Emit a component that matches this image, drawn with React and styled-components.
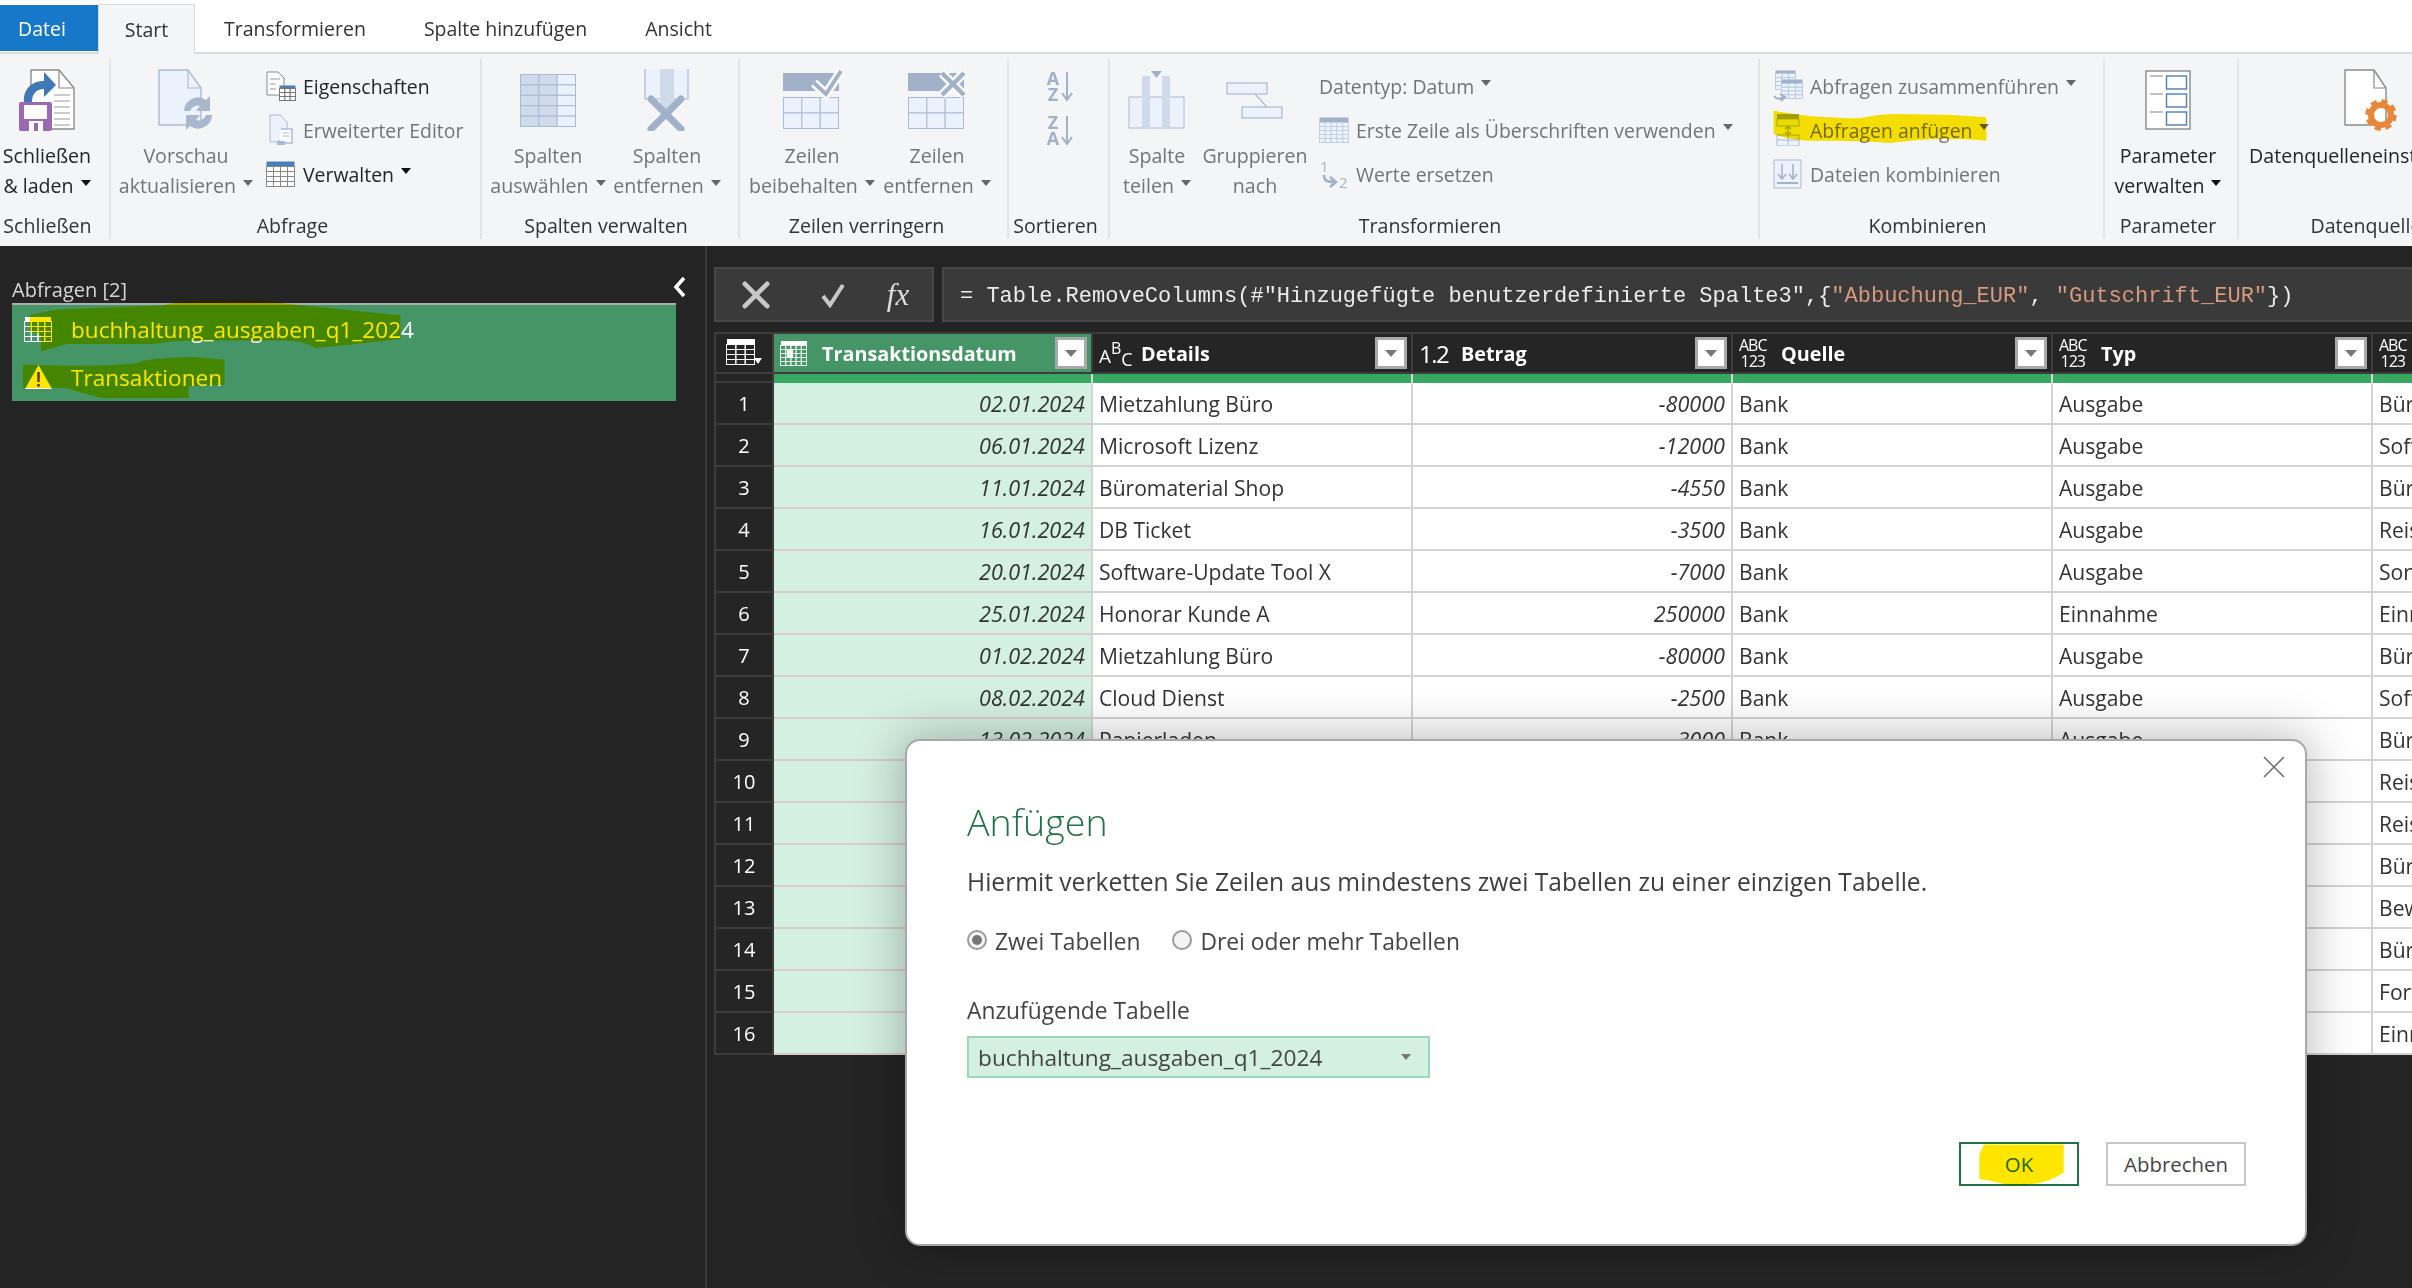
import React from "react";
import styled, { createGlobalStyle } from "styled-components";

const Global = createGlobalStyle`
  html, body { margin: 0; padding: 0; background: #252525; }
  body { width: 2412px; height: 1288px; overflow: hidden; font-family: "Open Sans", "Noto Sans", sans-serif; }
  * { box-sizing: border-box; }
`;

const Page = styled.div`
  width: 2412px; height: 1288px; position: relative; overflow: hidden;
  display: flex; flex-direction: column; background: #252525;
`;

/* tabs */
const TabBar = styled.div`
  height: 54px; flex: none; display: flex; align-items: flex-end; background: #fff;
  border-bottom: 2px solid #d9dadc; font-size: 19.5px; color: #333;
`;
const FileTab = styled.div`
  width: 98px; height: 46px; align-self: flex-start; margin-top: 5px; padding-right: 14px;
  background: #1777c9; color: #fff; display: flex; align-items: center; justify-content: center;
`;
const ActiveTab = styled.div`
  width: 97px; height: 50px; margin-bottom: -2px; background: #f4f5f7;
  border: 1px solid #d9dadc; border-bottom: 0; display: flex; align-items: center; justify-content: center;
`;
const Tab = styled.div`
  height: 48px; padding: 0 29px; display: flex; align-items: center;
`;

/* ribbon */
const Ribbon = styled.div`
  height: 192px; flex: none; background: #f4f5f7; display: flex; padding-top: 5px; align-items: flex-start;
`;
const Group = styled.div`
  width: ${p => p.$w}px; height: 180px; flex: none; display: flex; flex-direction: column;
  border-right: ${p => (p.$last ? "0" : "2px solid #e3e4e6")};
`;
const GroupBody = styled.div`
  height: 154px; display: flex; align-items: flex-start; padding-left: ${p => p.$pad || 0}px;
`;
const GroupLabel = styled.div`
  height: 26px; line-height: 26px; text-align: center; font-size: 19.6px; color: #333; white-space: nowrap;
  padding-right: ${p => p.$shift || 0}px;
`;
const Big = styled.div`
  width: ${p => p.$w}px; flex: none; display: flex; flex-direction: column; align-items: center;
  color: ${p => (p.$off ? "#747474" : "#252525")}; font-size: 19.6px; white-space: nowrap;
`;
const BigIcon = styled.div`
  height: 82px; display: flex; align-items: center; justify-content: center;
`;
const BigLine = styled.div`
  height: 30px; line-height: 30px; display: flex; align-items: center;
`;
const Caret = styled.span`
  display: inline-block; width: 0; height: 0; margin-left: 7px; margin-bottom: 6px;
  border-left: 5.5px solid transparent; border-right: 5.5px solid transparent;
  border-top: 6px solid ${p => (p.$off ? "#666" : "#111")};
`;
const SmallCol = styled.div`
  display: flex; flex-direction: column; padding-top: 5px; margin-left: ${p => p.$ml || 0}px;
`;
const SmallRow = styled.div`
  height: 44px; display: flex; align-items: center; position: relative; white-space: nowrap;
  color: ${p => (p.$off ? "#747474" : "#252525")}; font-size: 19.45px;
`;
const SmallIcon = styled.div`
  width: 37px; flex: none; height: 32px; display: flex; align-items: center;
`;
const SortCol = styled.div`
  width: 100%; display: flex; flex-direction: column; align-items: center; gap: 13px; padding-top: 12px;
`;

/* highlighter stroke */
const Marker = styled.svg`
  position: absolute; left: ${p => p.$x}px; top: ${p => p.$y}px;
  mix-blend-mode: multiply; pointer-events: none; overflow: visible;
`;
const Blob = ({ x, y, w, h, box, d }) => (
  <Marker $x={x} $y={y} width={w} height={h} viewBox={box} preserveAspectRatio="none">
    <path d={d} fill="#ffe600" />
  </Marker>
);

/* body */
const Body = styled.div`
  flex: 1; display: flex; min-height: 0; background: #242424;
`;
const Pane = styled.div`
  width: 707px; flex: none; border-right: 2px solid #3c3c3c; padding: 30px 0 0 12px; color: #fff;
`;
const PaneHead = styled.div`
  width: 675px; height: 27px; display: flex; justify-content: space-between; align-items: flex-start;
  font-size: 20px; color: #d6d6d6; line-height: 27px;
`;
const QueryList = styled.div`
  width: 664px; height: 98px; background: #459566; border-top: 2px solid #adadad; position: relative;
`;
const QueryRow = styled.div`
  height: 48px; display: flex; align-items: center; padding-left: 12px; font-size: 22.6px; color: #fff;
`;
const QueryIcon = styled.div`
  width: 47px; flex: none; display: flex; align-items: center;
`;
const Main = styled.div`
  flex: 1; min-width: 0; padding: 21px 0 0 7px; display: flex; flex-direction: column; overflow: hidden;
`;
const FormulaBar = styled.div`
  height: 55px; flex: none; display: flex; gap: 8px; margin-bottom: 10px;
`;
const FormulaTools = styled.div`
  width: 220px; flex: none; background: #3a3a3a; border: 2px solid #474747; display: flex; align-items: center;
  color: #cfcfcf;
`;
const ToolSlot = styled.div`
  width: ${p => p.$w}px; flex: none; display: flex; justify-content: center; align-items: center;
`;
const Fx = styled.span`
  font-family: "Liberation Serif", serif; font-style: italic; font-size: 31px; color: #dedede;
`;
const FormulaInput = styled.div`
  flex: 1; background: #3a3a3a; border: 2px solid #474747; border-right: 0; display: flex; align-items: center;
  padding: 3px 0 0 16px; font-family: "Liberation Mono", monospace; font-size: 22px; color: #ececec; white-space: pre;
`;
const Str = styled.span` color: #d79a7d; `;

const Table = styled.div`
  flex: none; display: flex; flex-direction: column; background: #252525;
`;
const HeadRow = styled.div`
  height: 42px; display: flex; border-top: 2px solid #3c3c3c; border-bottom: 2px solid #3c3c3c;
`;
const Corner = styled.div`
  width: 60px; flex: none; border-left: 2px solid #3c3c3c; border-right: 2px solid #3c3c3c;
  display: flex; align-items: center; justify-content: center;
`;
const HeadCell = styled.div`
  width: ${p => p.$w}px; flex: none; display: flex; align-items: center; position: relative;
  background: ${p => (p.$active ? "#459566" : "#252525")}; border-right: 2px solid #3c3c3c;
  color: #fff; font-weight: 700; font-size: 19.8px; padding-right: 4px; white-space: nowrap; overflow: hidden;
`;
const TypeBox = styled.div`
  width: 48px; flex: none; padding-left: 6px; display: flex; align-items: center; font-weight: 400;
  font-family: "Open Sans", sans-serif;
`;
const HeadName = styled.div` flex: 1; min-width: 0; `;
const FilterBtn = styled.div`
  width: 32px; height: 32px; flex: none; background: #fff; border: 3px solid #a9a9a9;
  display: flex; align-items: center; justify-content: center;
  &::after {
    content: ""; border-left: 6px solid transparent; border-right: 6px solid transparent; border-top: 7px solid #777;
  }
`;
const AbcStack = styled.div`
  display: flex; flex-direction: column; font-size: 16px; line-height: 16px; text-align: center; letter-spacing: -1px; color: #fff;
`;
const AbcLine = styled.span`
  font-size: ${p => p.$size}px; position: relative; top: ${p => p.$up}px;
`;
const AbcWrap = styled.div`
  display: flex; align-items: center; color: #fff; line-height: 1;
`;
const NumType = styled.span` font-size: 24px; color: #fff; letter-spacing: -1.5px; `;
const Strip = styled.div`
  height: 9px; display: flex;
`;
const StripCorner = styled.div`
  width: 60px; flex: none; border-left: 2px solid #3c3c3c; border-right: 2px solid #3c3c3c; border-bottom: 2px solid #3c3c3c;
`;
const StripCell = styled.div`
  width: ${p => p.$w}px; flex: none; background: #36a862; border-right: 2px solid #d5d5d5;
`;
const Row = styled.div`
  height: 42px; display: flex;
`;
const RowNum = styled.div`
  width: 60px; flex: none; border-left: 2px solid #3c3c3c; border-right: 2px solid #3c3c3c; border-bottom: 2px solid #3c3c3c;
  color: #fff; font-size: 20px; display: flex; align-items: center; justify-content: center;
`;
const Cell = styled.div`
  width: ${p => p.$w}px; flex: none; height: 42px; display: flex; align-items: center; white-space: nowrap; overflow: hidden;
  justify-content: ${p => (p.$num ? "flex-end" : "flex-start")}; padding: 0 6px;
  font-style: ${p => (p.$num ? "italic" : "normal")}; font-size: ${p => (p.$num ? 21.6 : 21.1)}px; color: #333;
  background: ${p => (p.$date ? "#d4f0e1" : "#fff")};
  border-right: 2px solid #d3d3d3; border-bottom: 2px solid ${p => (p.$date ? "#d9cbd0" : "#d3d3d3")};
`;

/* dialog */
const Dialog = styled.div`
  position: absolute; left: 907px; top: 741px; width: 1398px; height: 503px; background: #fff;
  border-radius: 13px; box-shadow: 0 0 0 2px #a8a8a8, 0 0 46px 6px rgba(0,0,0,.26);
  padding: 56px 59px 58px 60px; display: flex; flex-direction: column; color: #444; z-index: 5;
`;
const CloseX = styled.svg`
  position: absolute; right: 20px; top: 15px;
`;
const Title = styled.div`
  height: 50px; line-height: 50px; font-size: 37.6px; font-weight: 300; color: #217346;
`;
const Lead = styled.div`
  height: 34px; line-height: 34px; margin-top: 18px; font-size: 24.6px; color: #3f3f3f; white-space: nowrap;
`;
const RadioRow = styled.div`
  height: 30px; margin-top: 27px; display: flex; align-items: center; font-size: 22.8px; color: #444;
`;
const Radio = styled.span`
  width: 20px; height: 20px; border-radius: 50%; flex: none; border: 2px solid #9a9a9a; background: #f4f4f4; margin: -3px 8px 0 0;
  display: flex; align-items: center; justify-content: center;
  &::after { content: ""; width: 10px; height: 10px; border-radius: 50%; background: ${p => (p.$on ? "#777" : "transparent")}; }
`;
const RadioText = styled.span` margin-right: 32px; `;
const FieldLabel = styled.div`
  height: 30px; line-height: 30px; margin-top: 40px; font-size: 22.8px; color: #444;
`;
const Select = styled.div`
  width: 463px; height: 42px; margin-top: 10px; background: #d4f0e1; border: 2px solid #9dd6b9;
  display: flex; align-items: center; justify-content: space-between; padding: 0 17px 0 9px; font-size: 22.7px; color: #444;
  &::after { content: ""; border-left: 5.5px solid transparent; border-right: 5.5px solid transparent; border-top: 6px solid #777; }
`;
const Actions = styled.div`
  margin-top: auto; display: flex; justify-content: flex-end; gap: 27px;
`;
const Button = styled.div`
  width: ${p => p.$w}px; height: 44px; position: relative; display: flex; align-items: center; justify-content: center;
  border: 2px solid ${p => (p.$primary ? "#217346" : "#c6c6c6")}; color: ${p => (p.$primary ? "#217346" : "#444")};
  background: #fff; font-size: 20.4px;
`;

/* icons */
const S = "#a9bad6", L = "#ebf2fb", M = "#cfdbea", H = "#a1b1ca";

const CloseLoadIcon = () => (
  <svg width="56" height="62" viewBox="0 0 56 62">
    <path d="M12 1H40L55 19V60H12Z" fill="#fff" stroke="#8a8a8a" strokeWidth="1.4" />
    <path d="M40 1V19H55" fill="none" stroke="#8a8a8a" strokeWidth="1.2" />
    {[26, 32, 38, 44, 50, 56].map(y => <path key={y} d={`M35 ${y}H51`} stroke="#a8a8a8" strokeWidth="1.2" />)}
    <path d="M5 33C4 19 14 12 25 12V3L37 16L25 28V20C18 20 13 24 13 33Z" fill="#3f77b7" />
    <rect x="0" y="33" width="33" height="29" rx="2" fill="#9a69b4" />
    <rect x="5" y="36" width="23" height="14" fill="#fff" />
    <rect x="10" y="52" width="14" height="10" fill="#fff" />
    <rect x="15" y="54" width="4" height="8" fill="#9a69b4" />
  </svg>
);
const DocRefreshIcon = () => (
  <svg width="56" height="62" viewBox="0 0 56 62">
    <path d="M1 1H30L43 19V56H1Z" fill={L} stroke={S} strokeWidth="1.4" />
    <path d="M30 1V19H43" fill="none" stroke={S} strokeWidth="1.2" />
    <path d="M26 42A14 14 0 0 1 48 31L52 27V42H38L42 37A8 8 0 0 0 32 42Z" fill="#a9b7cc" />
    <path d="M54 46A14 14 0 0 1 32 57L28 61V46H42L38 51A8 8 0 0 0 48 46Z" fill="#a9b7cc" />
  </svg>
);
const GridSvg = ({ w, h, cols, rows, fill = L, stroke = S, dark, head, headH = 0, y0 = 0 }) => {
  const cw = w / cols, rh = (h - headH) / rows, out = [];
  for (let c = 0; c < cols; c++) for (let r = 0; r < rows; r++) {
    out.push(<rect key={`${c}-${r}`} x={0.5 + c * cw} y={0.5 + y0 + headH + r * rh} width={cw} height={rh}
      fill={dark && c < dark ? M : fill} stroke={stroke} strokeWidth="1" />);
  }
  return <>{head && <rect x="0.5" y={0.5 + y0} width={w} height={headH} fill={head} />}{out}</>;
};
const ChooseColsIcon = () => (
  <svg width="56" height="53" viewBox="0 0 56 53"><GridSvg w={55} h={52} cols={3} rows={5} dark={2} /></svg>
);
const RemoveColsIcon = () => (
  <svg width="46" height="62" viewBox="0 0 46 62">
    <path d="M1 0V30H44V0" fill={L} stroke={S} strokeWidth="1.2" />
    <path d="M16 0H30V36L23 46L16 36Z" fill={M} />
    <path d="M7 30L37 60M37 30L7 60" stroke={H} strokeWidth="7" strokeLinecap="round" />
  </svg>
);
const KeepRowsIcon = () => (
  <svg width="58" height="62" viewBox="0 0 58 62" style={{ overflow: "visible" }}>
    <rect x="0" y="4" width="56" height="18" fill={H} />
    <g transform="translate(0 28)"><GridSvg w={55} h={31} cols={3} rows={2} /></g>
    <path d="M31 14L43 25L58 2" fill="none" stroke="#fff" strokeWidth="9" />
    <path d="M31 14L43 25L58 2" fill="none" stroke={H} strokeWidth="4" />
  </svg>
);
const RemoveRowsIcon = () => (
  <svg width="58" height="62" viewBox="0 0 58 62">
    <rect x="0" y="4" width="56" height="18" fill={H} />
    <g transform="translate(0 28)"><GridSvg w={55} h={31} cols={3} rows={2} /></g>
    <path d="M34 4L56 26M56 4L34 26" stroke="#fff" strokeWidth="9" />
    <path d="M34 4L56 26M56 4L34 26" stroke={H} strokeWidth="4.5" />
  </svg>
);
const SortIcon = ({ a, b }) => (
  <svg width="28" height="31" viewBox="0 0 28 31">
    <text x="8" y="14" textAnchor="middle" fontFamily="Open Sans, sans-serif" fontWeight="700" fontSize="18" fill={H}>{a}</text>
    <text x="8" y="30" textAnchor="middle" fontFamily="Open Sans, sans-serif" fontWeight="700" fontSize="18" fill={H}>{b}</text>
    <path d="M22 1V28M17 22L22 29L27 22" fill="none" stroke={H} strokeWidth="2" />
  </svg>
);
const SplitIcon = () => (
  <svg width="58" height="58" viewBox="0 0 58 58">
    <rect x="1" y="26" width="55" height="31" fill={L} stroke={S} />
    <rect x="14" y="5" width="8" height="53" fill={M} />
    <rect x="34" y="5" width="8" height="53" fill={M} />
    <path d="M23 0H34L28.5 7Z" fill={H} />
  </svg>
);
const GroupIcon = () => (
  <svg width="58" height="37" viewBox="0 0 58 37">
    <rect x="1" y="1" width="40" height="11" fill={L} stroke={S} strokeWidth="1.2" />
    <rect x="16" y="25" width="40" height="11" fill={L} stroke={S} strokeWidth="1.2" />
    <path d="M29 12L41 25" stroke={S} strokeWidth="1.2" />
  </svg>
);
const FirstRowIcon = () => (
  <svg width="30" height="26" viewBox="0 0 30 26"><GridSvg w={29} h={25} cols={5} rows={5} head={H} headH={5} stroke="#c4d0e2" /></svg>
);
const ReplaceIcon = () => (
  <svg width="30" height="32" viewBox="0 0 30 32">
    <text x="1" y="14" fontFamily="Open Sans, sans-serif" fontSize="15" fill={H}>1</text>
    <text x="20" y="30" fontFamily="Open Sans, sans-serif" fontSize="15" fill={H}>2</text>
    <path d="M5 17C5 23 8 24 16 24M11 19L17 24L11 29" fill="none" stroke={H} strokeWidth="2.6" />
  </svg>
);
const MergeIcon = () => (
  <svg width="30" height="32" viewBox="0 0 30 32">
    <g transform="translate(2 0)"><GridSvg w={20} h={19} cols={3} rows={4} head={H} headH={3} stroke="#bccbdf" /></g>
    <g transform="translate(8 9)"><GridSvg w={21} h={19} cols={3} rows={4} head={H} headH={4} stroke="#bccbdf" /></g>
    <path d="M1 26C4 30 7 29 12 27M7 24L12 27L8 31" fill="none" stroke={H} strokeWidth="2" />
  </svg>
);
const AppendIcon = () => (
  <svg width="30" height="32" viewBox="0 0 30 32">
    <rect x="4" y="0" width="22" height="5" fill={H} />
    <rect x="4" y="5" width="22" height="7" fill={L} stroke={S} />
    <rect x="4" y="21" width="22" height="11" fill={L} stroke={S} />
    <path d="M15 21V31M4 26H26" stroke={S} />
    <path d="M15 12V21M12 15L15 12L18 15M12 18L15 21L18 18" fill="none" stroke={S} strokeWidth="1.5" />
  </svg>
);
const CombineIcon = () => (
  <svg width="30" height="30" viewBox="0 0 30 30">
    <rect x="1" y="1" width="27" height="28" fill={L} stroke={S} />
    <path d="M9 5V19M5 15L9 20L13 15M20 5V19M16 15L20 20L24 15" fill="none" stroke={H} strokeWidth="1.5" />
    <path d="M4 24H25" stroke={H} strokeWidth="2" />
  </svg>
);
const PropsIcon = () => (
  <svg width="30" height="30" viewBox="0 0 30 30">
    <path d="M1 1H12L18 7V24H1Z" fill="#fff" stroke="#888" />
    <path d="M4 8H14M4 13H10M4 18H10" stroke="#999" />
    <g transform="translate(13 14)"><GridSvg w={16} h={15} cols={3} rows={3} head="#4a7fb8" headH={3} fill="#fff" stroke="#777" /></g>
  </svg>
);
const EditorIcon = () => (
  <svg width="30" height="32" viewBox="0 0 30 32">
    <path d="M4 1H14L21 8V28H4Z" fill={L} stroke={S} />
    <path d="M15 15H26V29H13V26" fill="#fff" stroke={S} strokeWidth="1.5" />
    <path d="M17 19H23M17 22H23" stroke={S} />
    <rect x="11" y="27" width="8" height="4" fill={S} />
  </svg>
);
const ManageIcon = () => (
  <svg width="30" height="26" viewBox="0 0 30 26">
    <GridSvg w={28} h={25} cols={4} rows={4} head="#4a7fb8" headH={5} fill="#fff" stroke="#888" />
  </svg>
);
const ParamIcon = () => (
  <svg width="46" height="60" viewBox="0 0 46 60">
    <rect x="1" y="1" width="44" height="58" fill="#fff" stroke="#777" strokeWidth="1.2" />
    {[6, 24, 42].map(y => (
      <g key={y}>
        <path d={`M5 ${y}H18`} stroke="#999" strokeWidth="1.2" />
        <rect x="21.5" y={y} width="20" height="13" fill="#fff" stroke="#4a7fb8" strokeWidth="1.4" />
      </g>
    ))}
  </svg>
);
const SourceIcon = () => (
  <svg width="56" height="62" viewBox="0 0 56 62" style={{ overflow: "visible" }}>
    <path d="M1 1H30L42 19V56H1Z" fill="#fff" stroke="#8a8a8a" strokeWidth="1.4" />
    <path d="M30 1V19H42" fill="none" stroke="#8a8a8a" strokeWidth="1.2" />
    <circle cx="37" cy="46" r="10" fill="none" stroke="#e8873a" strokeWidth="6" />
    <circle cx="37" cy="46" r="13.5" fill="none" stroke="#e8873a" strokeWidth="4.5" strokeDasharray="6 4.6" />
  </svg>
);
const ChevronLeft = () => (
  <svg width="14" height="22" viewBox="0 0 14 22"><path d="M11 2L3 11L11 20" fill="none" stroke="#fff" strokeWidth="3.6" /></svg>
);
const QueryTableIcon = () => (
  <svg width="28" height="27" viewBox="0 0 28 27">
    <rect x="1" y="1" width="26" height="5" fill="#fff" />
    <GridSvg w={27} h={25} cols={4} rows={4} headH={5} fill="none" stroke="#fff" />
  </svg>
);
const WarnIcon = () => (
  <svg width="29" height="26" viewBox="0 0 29 26">
    <path d="M14.5 1L28 25H1Z" fill="#fff" />
    <path d="M14.5 8V18" stroke="#444" strokeWidth="2.4" />
    <circle cx="14.5" cy="21.3" r="1.5" fill="#444" />
  </svg>
);
const CancelGlyph = () => (
  <svg width="30" height="28" viewBox="0 0 32 30"><path d="M4 3L28 27M28 3L4 27" stroke="#c8c8c8" strokeWidth="5" strokeLinecap="round" /></svg>
);
const CheckGlyph = () => (
  <svg width="26" height="26" viewBox="0 0 26 26"><path d="M3 14L10 23L23 3" fill="none" stroke="#c8c8c8" strokeWidth="4" /></svg>
);
const CornerIcon = () => (
  <svg width="36" height="28" viewBox="0 0 36 28">
    <rect x="1" y="0" width="28" height="5" fill="#fff" />
    <GridSvg w={28} h={25} cols={3} rows={4} headH={5} fill="none" stroke="#fff" />
    <path d="M28 19H36L32 25Z" fill="#fff" />
  </svg>
);
const DateIcon = () => (
  <svg width="28" height="25" viewBox="0 0 28 25">
    <rect x="1" y="0" width="26" height="4" fill="#fff" />
    <GridSvg w={26} h={24} cols={5} rows={5} headH={4} fill="none" stroke="#e4f2ea" />
    <rect x="7" y="9" width="6" height="8" fill="#fff" />
  </svg>
);

const TypeIcon = ({ kind }) => {
  if (kind === "date") return <DateIcon />;
  if (kind === "abc") return (
    <AbcWrap>
      <AbcLine $size={19} $up={3}>A</AbcLine><AbcLine $size={16} $up={-5}>B</AbcLine><AbcLine $size={18} $up={6}>C</AbcLine>
    </AbcWrap>
  );
  if (kind === "num") return <NumType>1.2</NumType>;
  return <AbcStack><span>ABC</span><span>123</span></AbcStack>;
};

const columns = [
  { w: 319, name: "Transaktionsdatum", kind: "date", active: true },
  { w: 320, name: "Details", kind: "abc" },
  { w: 320, name: "Betrag", kind: "num" },
  { w: 320, name: "Quelle", kind: "any" },
  { w: 320, name: "Typ", kind: "any" },
  { w: 320, name: "Kategorie", kind: "any" },
];

const rows = [
  ["02.01.2024", "Mietzahlung Büro", "-80000", "Bank", "Ausgabe", "Büro"],
  ["06.01.2024", "Microsoft Lizenz", "-12000", "Bank", "Ausgabe", "Software"],
  ["11.01.2024", "Büromaterial Shop", "-4550", "Bank", "Ausgabe", "Büro"],
  ["16.01.2024", "DB Ticket", "-3500", "Bank", "Ausgabe", "Reise"],
  ["20.01.2024", "Software-Update Tool X", "-7000", "Bank", "Ausgabe", "Sonstiges"],
  ["25.01.2024", "Honorar Kunde A", "250000", "Bank", "Einnahme", "Einnahmen"],
  ["01.02.2024", "Mietzahlung Büro", "-80000", "Bank", "Ausgabe", "Büro"],
  ["08.02.2024", "Cloud Dienst", "-2500", "Bank", "Ausgabe", "Software"],
  ["13.02.2024", "Papierladen", "-3000", "Bank", "Ausgabe", "Büro"],
  ["", "", "", "", "", "Reise"],
  ["", "", "", "", "", "Reise"],
  ["", "", "", "", "", "Büro"],
  ["", "", "", "", "", "Bewirtung"],
  ["", "", "", "", "", "Büro"],
  ["", "", "", "", "", "Fortbildung"],
  ["", "", "", "", "", "Einnahmen"],
];

const BigButton = ({ w, off, icon, lines, caret }) => (
  <Big $w={w} $off={off}>
    <BigIcon>{icon}</BigIcon>
    {lines.map((t, i) => (
      <BigLine key={i}>{t}{caret && i === lines.length - 1 && <Caret $off={off} />}</BigLine>
    ))}
  </Big>
);
const SmallButton = ({ off, icon, text, caret, children }) => (
  <SmallRow $off={off}>
    {icon && <SmallIcon>{icon}</SmallIcon>}
    {text}{caret && <Caret $off={off} />}
    {children}
  </SmallRow>
);

export default function App() {
  return (
    <Page>
      <Global />
      <TabBar>
        <FileTab>Datei</FileTab>
        <ActiveTab>Start</ActiveTab>
        <Tab>Transformieren</Tab>
        <Tab>Spalte hinzufügen</Tab>
        <Tab>Ansicht</Tab>
      </TabBar>

      <Ribbon>
        <Group $w={111}>
          <GroupBody><BigButton w={94} icon={<CloseLoadIcon />} lines={["Schließen", "& laden"]} caret /></GroupBody>
          <GroupLabel $shift={14}>Schließen</GroupLabel>
        </Group>
        <Group $w={371}>
          <GroupBody>
            <BigButton w={150} off icon={<DocRefreshIcon />} lines={["Vorschau", "aktualisieren"]} caret />
            <SmallCol $ml={5}>
              <SmallButton icon={<PropsIcon />} text="Eigenschaften" />
              <SmallButton off icon={<EditorIcon />} text="Erweiterter Editor" />
              <SmallButton icon={<ManageIcon />} text="Verwalten" caret />
            </SmallCol>
          </GroupBody>
          <GroupLabel $shift={6}>Abfrage</GroupLabel>
        </Group>
        <Group $w={258}>
          <GroupBody $pad={5}>
            <BigButton w={122} off icon={<ChooseColsIcon />} lines={["Spalten", "auswählen"]} caret />
            <BigButton w={116} off icon={<RemoveColsIcon />} lines={["Spalten", "entfernen"]} caret />
          </GroupBody>
          <GroupLabel $shift={8}>Spalten verwalten</GroupLabel>
        </Group>
        <Group $w={269}>
          <GroupBody $pad={8}>
            <BigButton w={128} off icon={<KeepRowsIcon />} lines={["Zeilen", "beibehalten"]} caret />
            <BigButton w={122} off icon={<RemoveRowsIcon />} lines={["Zeilen", "entfernen"]} caret />
          </GroupBody>
          <GroupLabel $shift={14}>Zeilen verringern</GroupLabel>
        </Group>
        <Group $w={101}>
          <GroupBody>
            <SortCol><SortIcon a="A" b="Z" /><SortIcon a="Z" b="A" /></SortCol>
          </GroupBody>
          <GroupLabel $shift={6}>Sortieren</GroupLabel>
        </Group>
        <Group $w={650}>
          <GroupBody $pad={9}>
            <BigButton w={76} off icon={<SplitIcon />} lines={["Spalte", "teilen"]} caret />
            <BigButton w={120} off icon={<GroupIcon />} lines={["Gruppieren", "nach"]} />
            <SmallCol $ml={4}>
              <SmallButton off text="Datentyp: Datum" caret />
              <SmallButton off icon={<FirstRowIcon />} text="Erste Zeile als Überschriften verwenden" caret />
              <SmallButton off icon={<ReplaceIcon />} text="Werte ersetzen" />
            </SmallCol>
          </GroupBody>
          <GroupLabel $shift={8}>Transformieren</GroupLabel>
        </Group>
        <Group $w={345}>
          <GroupBody $pad={13}>
            <SmallCol>
              <SmallButton off icon={<MergeIcon />} text="Abfragen zusammenführen" caret />
              <SmallButton off icon={<AppendIcon />} text="Abfragen anfügen" caret>
                <Blob x={-2} y={1} w={218} h={35} box="330 330 420 105"
                  d="M335 335Q370 345 400 350T500 358Q540 345 570 345T680 348L745 355V425Q690 418 650 420T560 432Q500 425 450 425H400Q360 420 335 405Z" />
              </SmallButton>
              <SmallButton off icon={<CombineIcon />} text="Dateien kombinieren" />
            </SmallCol>
          </GroupBody>
          <GroupLabel $shift={8}>Kombinieren</GroupLabel>
        </Group>
        <Group $w={134}>
          <GroupBody>
            <BigButton w={126} icon={<ParamIcon />} lines={["Parameter", "verwalten"]} caret />
          </GroupBody>
          <GroupLabel $shift={6}>Parameter</GroupLabel>
        </Group>
        <Group $w={266} $last>
          <GroupBody>
            <BigButton w={266} icon={<SourceIcon />} lines={["Datenquelleneinstellungen"]} />
          </GroupBody>
          <GroupLabel>Datenquellen</GroupLabel>
        </Group>
      </Ribbon>

      <Body>
        <Pane>
          <PaneHead>Abfragen [2]<ChevronLeft /></PaneHead>
          <QueryList>
            <QueryRow><QueryIcon><QueryTableIcon /></QueryIcon>buchhaltung_ausgaben_q1_2024</QueryRow>
            <QueryRow><QueryIcon><WarnIcon /></QueryIcon>Transaktionen</QueryRow>
            <Blob x={-12} y={-8} w={408} h={57} box="0 140 800 170"
              d="M58 195Q80 185 100 180T320 165Q350 150 440 148T560 160L660 175L785 195V265Q700 280 620 292Q590 270 560 270H380Q340 270 300 280H130Q100 295 80 302V250Q60 245 58 240Z" />
            <Blob x={-12} y={48} w={255} h={50} box="0 310 500 150"
              d="M45 345L130 348Q220 350 270 340Q285 325 380 322L440 330V405L370 410V445H200Q160 430 130 415H45Z" />
          </QueryList>
        </Pane>
        <Main>
          <FormulaBar>
            <FormulaTools>
              <ToolSlot $w={80}><CancelGlyph /></ToolSlot>
              <ToolSlot $w={74}><CheckGlyph /></ToolSlot>
              <ToolSlot $w={56}><Fx>fx</Fx></ToolSlot>
            </FormulaTools>
            <FormulaInput>
              {"= Table.RemoveColumns(#\"Hinzugefügte benutzerdefinierte Spalte3\",{"}
              <Str>"Abbuchung_EUR"</Str>{", "}<Str>"Gutschrift_EUR"</Str>{"})"}
            </FormulaInput>
          </FormulaBar>
          <Table>
            <HeadRow>
              <Corner><CornerIcon /></Corner>
              {columns.map(c => (
                <HeadCell key={c.name} $w={c.w} $active={c.active}>
                  <TypeBox><TypeIcon kind={c.kind} /></TypeBox>
                  <HeadName>{c.name}</HeadName>
                  <FilterBtn />
                </HeadCell>
              ))}
            </HeadRow>
            <Strip>
              <StripCorner />
              {columns.map(c => <StripCell key={c.name} $w={c.w} />)}
            </Strip>
            {rows.map((r, i) => (
              <Row key={i}>
                <RowNum>{i + 1}</RowNum>
                {r.map((v, j) => (
                  <Cell key={j} $w={columns[j].w} $date={j === 0} $num={j === 0 || j === 2}>{v}</Cell>
                ))}
              </Row>
            ))}
          </Table>
        </Main>
      </Body>

      <Dialog>
        <CloseX width="22" height="22" viewBox="0 0 22 22"><path d="M1 1L21 21M21 1L1 21" stroke="#6e6e6e" strokeWidth="1.6" /></CloseX>
        <Title>Anfügen</Title>
        <Lead>Hiermit verketten Sie Zeilen aus mindestens zwei Tabellen zu einer einzigen Tabelle.</Lead>
        <RadioRow>
          <Radio $on /><RadioText>Zwei Tabellen</RadioText>
          <Radio /><RadioText>Drei oder mehr Tabellen</RadioText>
        </RadioRow>
        <FieldLabel>Anzufügende Tabelle</FieldLabel>
        <Select>buchhaltung_ausgaben_q1_2024</Select>
        <Actions>
          <Button $primary $w={120}>
            OK
            <Blob x={16} y={-2} w={89} h={45} box="635 1165 190 125"
              d="M650 1172H820V1250Q800 1268 780 1275T730 1285Q700 1285 680 1278T640 1268V1200Z" />
          </Button>
          <Button $w={140}>Abbrechen</Button>
        </Actions>
      </Dialog>
    </Page>
  );
}
